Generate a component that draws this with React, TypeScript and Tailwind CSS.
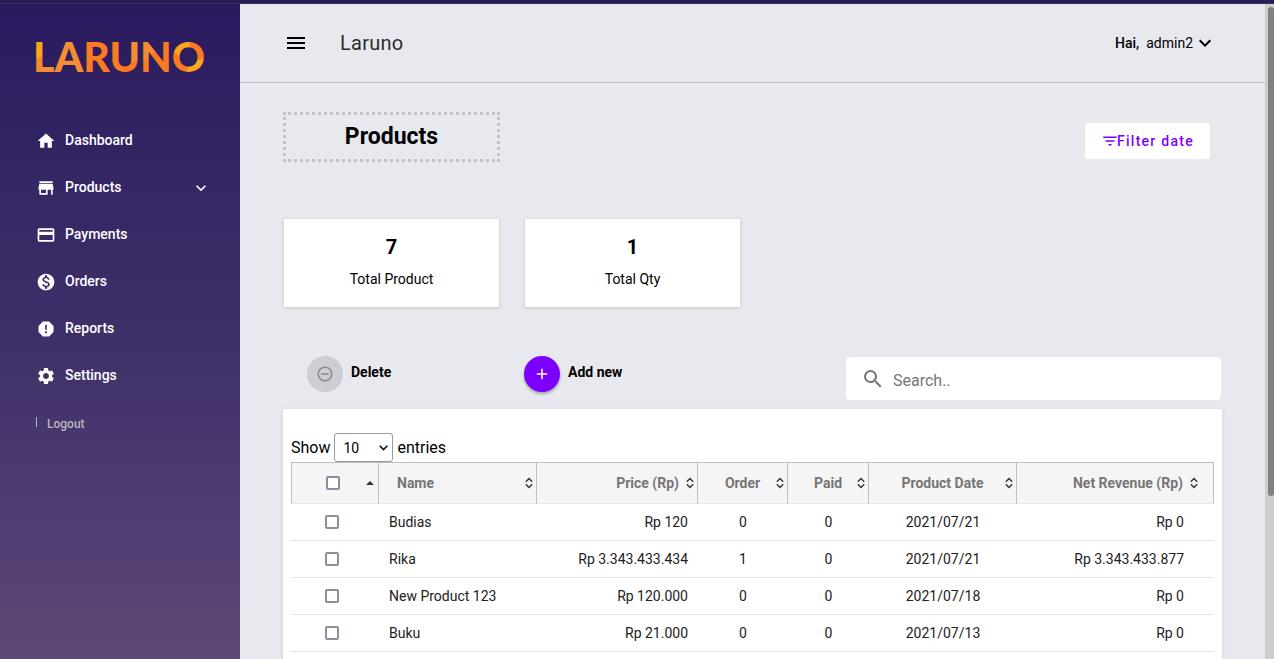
import type { ReactNode } from "react";
import type { IconType } from "react-icons";
import {
  MdAdd,
  MdCreditCard,
  MdExpandMore,
  MdFilterList,
  MdHome,
  MdMenu,
  MdMonetizationOn,
  MdRemoveCircleOutline,
  MdReport,
  MdSearch,
  MdSettings,
  MdStore,
} from "react-icons/md";

type NavItem = { label: string; icon: IconType; expandable?: boolean };

const NAV: NavItem[] = [
  { label: "Dashboard", icon: MdHome },
  { label: "Products", icon: MdStore, expandable: true },
  { label: "Payments", icon: MdCreditCard },
  { label: "Orders", icon: MdMonetizationOn },
  { label: "Reports", icon: MdReport },
  { label: "Settings", icon: MdSettings },
];

const STATS = [
  { value: "7", label: "Total Product" },
  { value: "1", label: "Total Qty" },
];

const ROWS = [
  { name: "Budias", price: "Rp 120", order: 0, paid: 0, date: "2021/07/21", net: "Rp 0" },
  { name: "Rika", price: "Rp 3.343.433.434", order: 1, paid: 0, date: "2021/07/21", net: "Rp 3.343.433.877" },
  { name: "New Product 123", price: "Rp 120.000", order: 0, paid: 0, date: "2021/07/18", net: "Rp 0" },
  { name: "Buku", price: "Rp 21.000", order: 0, paid: 0, date: "2021/07/13", net: "Rp 0" },
];

function Logo() {
  return (
    <svg className="h-12 w-[184px]" viewBox="0 0 184 48" role="img" aria-label="Laruno">
      <defs>
        <pattern id="facets" patternUnits="userSpaceOnUse" width="184" height="48">
          <rect width="184" height="48" fill="#f97a20" />
          <path d="M0 0H14V22L0 28Z" fill="#fba51d" />
          <path d="M0 28L14 22V48H0Z" fill="#f68a30" />
          <path d="M14 0H52V48H14Z" fill="#f68c33" />
          <path d="M96 0H108V26L98 30Z" fill="#f68c33" />
          <path d="M108 0H120L126 16L109 30Z" fill="#f68c33" />
          <path d="M138 14L158 4V14L146 23Z" fill="#fba51d" />
          <path d="M156 30L184 22V48H154Z" fill="#fba51d" />
        </pattern>
      </defs>
      <text x="1" y="39" fill="url(#facets)" className="font-['Lato',sans-serif] text-[41px] font-black">
        LARUNO
      </text>
    </svg>
  );
}

function Sidebar() {
  return (
    <aside className="flex w-60 shrink-0 flex-col bg-linear-to-b from-[#2a1a5e] via-[#3f2f69] to-[#5c4876] text-white">
      <div className="pt-[29px] pl-8">
        <Logo />
      </div>
      <nav className="mt-9">
        <ul>
          {NAV.map(({ label, icon: Icon, expandable }) => (
            <li key={label}>
              <a href="#" className="flex h-[47px] items-center pr-[29px] pl-9 text-sm font-medium">
                <Icon className="mr-[9px] size-5" />
                <span className="flex-1 pb-0.5">{label}</span>
                {expandable && <MdExpandMore className="size-5" />}
              </a>
            </li>
          ))}
        </ul>
      </nav>
      <a href="#" className="mt-[15px] ml-9 flex items-start gap-2.5 text-xs leading-5 font-medium text-[#bdb5bd]">
        <span className="mt-[3px] h-2.5 w-px bg-[#bdb5bd]" />
        Logout
      </a>
    </aside>
  );
}

function Header() {
  return (
    <header className="flex h-[79px] items-center border-b border-[#bfbfbf] pr-12 pl-11">
      <button type="button" aria-label="Toggle menu">
        <MdMenu className="size-6" />
      </button>
      <span className="ml-8 text-xl tracking-[0.25px] text-[#2b2b2b]">Laruno</span>
      <button type="button" className="ml-auto flex items-center text-sm">
        <span className="mr-[7px] font-medium">Hai,</span>
        <span>admin2</span>
        <MdExpandMore className="size-6" />
      </button>
    </header>
  );
}

function SortIcon() {
  return (
    <svg className="h-3 w-2 shrink-0" viewBox="0 0 8 12" fill="none" stroke="#333" strokeWidth="1.4">
      <path d="M0.8 4.7L4 1.5L7.2 4.7M0.8 7.3L4 10.5L7.2 7.3" />
    </svg>
  );
}

function Heading({ children, align, last }: { children: ReactNode; align: string; last?: boolean }) {
  return (
    <th className="border-t border-r border-b border-[#bfbfbf] border-b-[#e6e6ea] bg-[#f5f5f5] p-0">
      <button
        type="button"
        className={`flex w-full items-center gap-[7px] pl-[18px] text-sm font-bold text-[#757575] ${last ? "pr-[15px]" : "pr-[3px]"}`}
      >
        <span className={`flex-1 whitespace-nowrap ${align}`}>{children}</span>
        <SortIcon />
      </button>
    </th>
  );
}

function Check({ label }: { label: string }) {
  return (
    <input
      type="checkbox"
      aria-label={label}
      className="block size-3.5 appearance-none rounded-xs border-2 border-[#8f8c9e] bg-white checked:bg-[#7b00ff]"
    />
  );
}

function ProductTable() {
  return (
    <table className="w-full table-fixed border-separate border-spacing-0 text-sm text-[#212121]">
      <colgroup>
        <col className="w-[88px]" />
        <col className="w-[158px]" />
        <col className="w-[161px]" />
        <col className="w-[90px]" />
        <col className="w-[81px]" />
        <col className="w-[148px]" />
        <col className="w-[197px]" />
      </colgroup>
      <thead>
        <tr className="h-[42px]">
          <th className="border border-[#bfbfbf] border-b-[#e6e6ea] bg-[#f5f5f5] p-0">
            <div className="flex items-center justify-between pr-1 pl-[34px]">
              <Check label="Select all products" />
              <button type="button" aria-label="Sort by selection">
                <svg className="h-1 w-2" viewBox="0 0 8 4" fill="#333">
                  <path d="M0 4L4 0L8 4Z" />
                </svg>
              </button>
            </div>
          </th>
          <Heading align="text-left">Name</Heading>
          <Heading align="text-right">Price (Rp)</Heading>
          <Heading align="text-center">Order</Heading>
          <Heading align="text-center">Paid</Heading>
          <Heading align="text-center">Product Date</Heading>
          <Heading align="text-right" last>
            Net Revenue (Rp)
          </Heading>
        </tr>
      </thead>
      <tbody className="[&_td]:border-b [&_td]:border-[#e6e6ea]">
        {ROWS.map((row) => (
          <tr key={row.name} className="h-[37px]">
            <td className="pl-[34px]">
              <Check label={`Select ${row.name}`} />
            </td>
            <td className="px-2.5">{row.name}</td>
            <td className="px-2.5 text-right">{row.price}</td>
            <td className="text-center">{row.order}</td>
            <td className="text-center">{row.paid}</td>
            <td className="text-center">{row.date}</td>
            <td className="pr-[30px] text-right">{row.net}</td>
          </tr>
        ))}
      </tbody>
    </table>
  );
}

export default function App() {
  return (
    <div className="flex h-screen flex-col overflow-hidden bg-[#e8e9ee] font-['Roboto',sans-serif] text-black">
      <div className="h-1 shrink-0 border-b border-[#3a2f68] bg-[#2a1d4f]" />
      <div className="flex min-h-0 flex-1">
        <Sidebar />
        <main className="min-w-0 flex-1 overflow-hidden">
          <Header />
          <div className="pr-[43px] pl-[43px]">
            <div className="flex items-center justify-between pt-[29px] pr-3">
              <h1 className="flex h-[50px] w-[217px] items-center justify-center border-3 border-dotted border-[#c4c4c4] pt-px text-[23px] font-bold">
                Products
              </h1>
              <button
                type="button"
                className="mt-2 flex h-9 w-[125px] items-center justify-center rounded-xs bg-white text-sm font-medium tracking-[1.25px] text-[#7b00ff]"
              >
                <MdFilterList className="-mr-0.5 size-[18px]" />
                Filter date
              </button>
            </div>

            <div className="mt-[57px] flex gap-[26px] pl-px">
              {STATS.map((s) => (
                <section
                  key={s.label}
                  className="flex h-[88px] w-[215px] flex-col items-center bg-white pt-3.5 shadow-[0_1px_4px_rgba(0,0,0,0.16)]"
                >
                  <strong className="text-xl leading-7 font-bold">{s.value}</strong>
                  <span className="mt-2 text-sm leading-5">{s.label}</span>
                </section>
              ))}
            </div>

            <div className="mt-[49px] flex items-start pr-px pl-6">
              <button type="button" disabled className="flex w-[217px] items-center gap-2 text-sm font-bold">
                <span className="flex size-9 items-center justify-center rounded-full bg-[#cdced3] text-[#88898d]">
                  <MdRemoveCircleOutline className="size-[18px]" />
                </span>
                <span className="pb-1">Delete</span>
              </button>
              <button type="button" className="flex items-center gap-2 text-sm font-bold">
                <span className="flex size-9 items-center justify-center rounded-full bg-[#7b00ff] text-white shadow-[0_2px_3px_rgba(0,0,0,0.3)]">
                  <MdAdd className="size-[18px]" />
                </span>
                <span className="pb-1">Add new</span>
              </button>
              <label className="mt-px ml-auto flex h-[43px] w-[375px] items-center rounded-sm bg-white pl-[15px]">
                <MdSearch className="mr-2 size-6 shrink-0 text-[#757575]" />
                <input
                  type="search"
                  aria-label="Search products"
                  placeholder="Search.."
                  className="h-full min-w-0 flex-1 bg-transparent pt-1 text-base outline-none placeholder:text-[#757575]"
                />
              </label>
            </div>

            <section className="mt-[9px] h-screen rounded-xs bg-white px-2 pt-6 shadow-[0_1px_5px_rgba(0,0,0,0.1)]">
              <label className="flex items-center gap-1 text-base">
                Show
                <span className="relative flex">
                  <select
                    defaultValue="10"
                    className="h-[29px] w-[59px] appearance-none rounded-[3px] border border-[#999] bg-white px-2 pt-px text-sm"
                  >
                    <option>10</option>
                    <option>25</option>
                    <option>50</option>
                  </select>
                  <svg
                    className="pointer-events-none absolute top-3 right-[5px] h-1.5 w-[9px]"
                    viewBox="0 0 9 6"
                    fill="none"
                    stroke="#111"
                    strokeWidth="1.6"
                  >
                    <path d="M0.7 0.8L4.5 4.6L8.3 0.8" />
                  </svg>
                </span>
                entries
              </label>
              <ProductTable />
            </section>
          </div>
        </main>
        <div className="w-[9px] shrink-0 bg-[#cdcdcd] pt-[3px] pl-[3px]" aria-hidden="true">
          <div className="h-3/4 rounded-full bg-[#7d8181]" />
        </div>
      </div>
    </div>
  );
}
